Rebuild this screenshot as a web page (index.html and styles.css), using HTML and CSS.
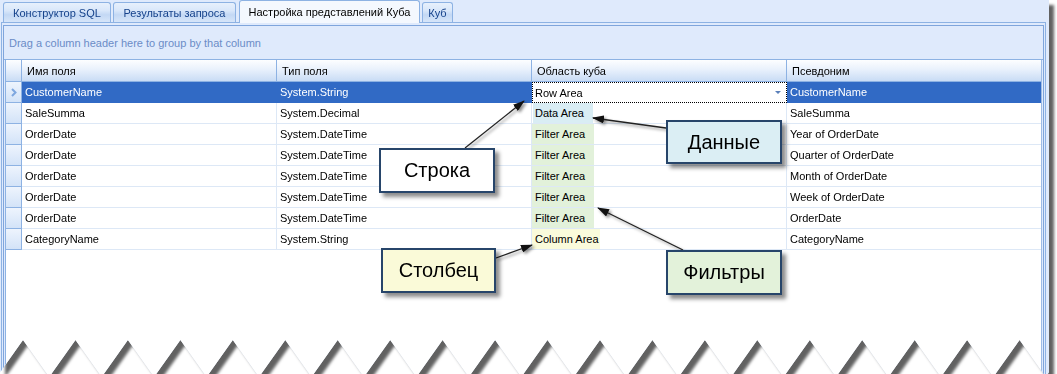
FILE: index.html
```html
<!DOCTYPE html>
<html lang="ru">
<head>
<meta charset="utf-8">
<title>Настройка представлений Куба</title>
<link rel="stylesheet" href="styles.css">
</head>
<body>
<div class="shot">
  <div class="frame">
    <div class="tabs">
      <div class="tab tab-sql">Конструктор SQL</div>
      <div class="tab tab-res">Результаты запроса</div>
      <div class="tab tab-cube-set active">Настройка представлений Куба</div>
      <div class="tab tab-cube">Куб</div>
    </div>
    <div class="page">
      <div class="inner">
        <div class="group-panel">Drag a column header here to group by that column</div>
        <div class="grid">
          <div class="row head">
            <div class="cell ind"></div>
            <div class="cell">Имя поля</div>
            <div class="cell">Тип поля</div>
            <div class="cell">Область куба</div>
            <div class="cell last">Псевдоним</div>
          </div>
          <div class="row selected">
            <div class="cell ind"><svg class="chev" width="6" height="9" viewBox="0 0 6 9"><polyline points="1,1 4.5,4.5 1,8" fill="none" stroke="#7ea7df" stroke-width="2"/></svg></div>
            <div class="cell">CustomerName</div>
            <div class="cell">System.String</div>
            <div class="cell editor">Row Area<span class="dd"></span></div>
            <div class="cell last">CustomerName</div>
          </div>
          <div class="row">
            <div class="cell ind"></div>
            <div class="cell">SaleSumma</div>
            <div class="cell">System.Decimal</div>
            <div class="cell area"><span class="tag tag-data">Data Area</span></div>
            <div class="cell last">SaleSumma</div>
          </div>
          <div class="row">
            <div class="cell ind"></div>
            <div class="cell">OrderDate</div>
            <div class="cell">System.DateTime</div>
            <div class="cell area"><span class="tag tag-filter">Filter Area</span></div>
            <div class="cell last">Year of OrderDate</div>
          </div>
          <div class="row">
            <div class="cell ind"></div>
            <div class="cell">OrderDate</div>
            <div class="cell">System.DateTime</div>
            <div class="cell area"><span class="tag tag-filter">Filter Area</span></div>
            <div class="cell last">Quarter of OrderDate</div>
          </div>
          <div class="row">
            <div class="cell ind"></div>
            <div class="cell">OrderDate</div>
            <div class="cell">System.DateTime</div>
            <div class="cell area"><span class="tag tag-filter">Filter Area</span></div>
            <div class="cell last">Month of OrderDate</div>
          </div>
          <div class="row">
            <div class="cell ind"></div>
            <div class="cell">OrderDate</div>
            <div class="cell">System.DateTime</div>
            <div class="cell area"><span class="tag tag-filter">Filter Area</span></div>
            <div class="cell last">Week of OrderDate</div>
          </div>
          <div class="row">
            <div class="cell ind"></div>
            <div class="cell">OrderDate</div>
            <div class="cell">System.DateTime</div>
            <div class="cell area"><span class="tag tag-filter">Filter Area</span></div>
            <div class="cell last">OrderDate</div>
          </div>
          <div class="row">
            <div class="cell ind"></div>
            <div class="cell">CategoryName</div>
            <div class="cell">System.String</div>
            <div class="cell area"><span class="tag tag-col">Column Area</span></div>
            <div class="cell last">CategoryName</div>
          </div>
        </div>
      </div>
    </div>

    <svg class="arrows" width="1049" height="380" viewBox="0 0 1049 380">
      <defs>
        <marker id="ah" viewBox="0 0 12 8" refX="11" refY="4" markerWidth="12" markerHeight="8" orient="auto" markerUnits="userSpaceOnUse">
          <path d="M0,0 L12,4 L0,8 z" fill="#111"/>
        </marker>
      </defs>
      <g stroke="#222" stroke-width="1.3" fill="none" marker-end="url(#ah)">
        <line x1="465" y1="148" x2="524" y2="101"/>
        <line x1="666" y1="128" x2="593" y2="118"/>
        <line x1="683" y1="250" x2="598" y2="208"/>
        <line x1="496" y1="258" x2="532" y2="245"/>
      </g>
    </svg>

    <div class="callout c-row">Строка</div>
    <div class="callout c-data">Данные</div>
    <div class="callout c-col">Столбец</div>
    <div class="callout c-filter">Фильтры</div>
  </div>
</div>
</body>
</html>
```
FILE: styles.css
```css
* { box-sizing: border-box; }
html, body { margin: 0; padding: 0; background: #fff; }
body {
  width: 1057px;
  height: 374px;
  overflow: hidden;
  font-family: "Liberation Sans", Arial, sans-serif;
  font-size: 11px;
  color: #000;
}

.shot {
  width: 1049px;
  filter: drop-shadow(5px 5px 1.5px rgba(0, 0, 0, 0.62));
}

.frame {
  position: relative;
  width: 1049px;
  height: 380px;
  background: #dfeafc;
  display: flex;
  flex-direction: column;
  clip-path: polygon(0 0, 1049px 0, 1049px 372.5px, 1045.8px 377px, 1019.6px 340px, 993.3px 377px, 967.1px 340px, 940.9px 377px, 914.7px 340px, 888.4px 377px, 862.2px 340px, 836px 377px, 809.8px 340px, 783.5px 377px, 757.3px 340px, 731.1px 377px, 704.9px 340px, 678.6px 377px, 652.4px 340px, 626.2px 377px, 600px 340px, 573.7px 377px, 547.5px 340px, 521.3px 377px, 495.1px 340px, 468.8px 377px, 442.6px 340px, 416.4px 377px, 390.2px 340px, 363.9px 377px, 337.7px 340px, 311.5px 377px, 285.3px 340px, 259px 377px, 232.8px 340px, 206.6px 377px, 180.4px 340px, 154.1px 377px, 127.9px 340px, 101.7px 377px, 75.5px 340px, 49.2px 377px, 23px 340px, 0 372.5px);
}

/* Tabs */
.tabs {
  display: flex;
  align-items: flex-end;
  gap: 2px;
  height: 22px;
  padding-left: 3px;
  position: relative;
  z-index: 2;
}
.tab {
  height: 20px;
  border: 1px solid #8db2e3;
  border-bottom: none;
  border-radius: 3px 3px 0 0;
  background: linear-gradient(to bottom, #e7f0fc 0%, #d9e7fa 40%, #c3d8f4 62%, #d6e5f9 100%);
  color: #15428b;
  display: flex;
  align-items: center;
  justify-content: center;
  padding-top: 1px;
  white-space: nowrap;
}
.tab-sql { width: 108px; }
.tab-res { width: 123px; }
.tab-cube-set { width: 181px; margin-left: 1px; }
.tab-cube { width: 31px; }
.tab.active {
  height: 23px;
  margin-bottom: -1px;
  background: #f4f8fe;
  color: #000;
  padding-top: 0;
}

/* Page */
.page {
  flex: 1;
  margin-left: 1px;
  width: 1045px;
  border: 1px solid #8db2e3;
  border-bottom: none;
  padding: 2px 1px 0 1px;
  display: flex;
  flex-direction: column;
}
.inner {
  flex: 1;
  border: 1px solid #7fa5dc;
  border-bottom: none;
  padding: 0 1px;
  display: flex;
  flex-direction: column;
}
.group-panel {
  height: 34px;
  margin: 0 -1px;
  padding-left: 5px;
  border-bottom: 1px solid #8db2e3;
  display: flex;
  align-items: center;
  color: #6b8cc7;
  background: #dfeafc;
}

/* Grid */
.grid {
  flex: 1;
  background: #fff;
  border-left: 1px solid #8db2e3;
  border-right: 1px solid #9dbbe6;
}
.row {
  display: grid;
  grid-template-columns: 16px 255px 255px 255px 254px;
  height: 21px;
}
.cell {
  border-right: 1px solid #dde8f6;
  border-bottom: 1px solid #dde8f6;
  padding-left: 3px;
  display: flex;
  align-items: center;
  white-space: nowrap;
  overflow: hidden;
}
.cell.last { border-right: none; }
.cell.ind {
  padding: 0;
  justify-content: center;
  background: linear-gradient(to bottom, #eef4fd, #d3e3f8);
  border-right: 1px solid #8db2e3;
  border-bottom: 1px solid #8db2e3;
}
.row.head { height: 22px; }
.row.head .cell {
  padding-left: 5px;
  background: linear-gradient(to bottom, #fdfeff 0%, #e9f1fc 45%, #c9dcf5 100%);
  border-right: 1px solid #8db2e3;
  border-bottom: 1px solid #8db2e3;
}
.row.head .cell.last { border-right: none; }

.row.selected .cell:not(.ind):not(.editor) {
  background: #316ac5;
  color: #fff;
  border-right-color: #316ac5;
  border-bottom-color: #316ac5;
}
.row.selected .cell.editor {
  background: #fff;
  border: 1px dotted #000;
  padding-left: 2px;
}
.dd {
  margin-left: auto;
  margin-right: 5px;
  width: 0;
  height: 0;
  border-left: 3px solid transparent;
  border-right: 3px solid transparent;
  border-top: 3px solid #5a80ba;
}

.cell.area { padding-left: 0; align-items: stretch; }
.tag {
  display: flex;
  align-items: center;
  padding-left: 3px;
}
.tag-data { width: 60px; margin-left: 1px; padding-left: 2px; background: #d9edf4; }
.tag-filter { width: 62px; background: #e2f1da; }
.tag-col { width: 68px; background: #fafbdb; }

/* Annotations */
.arrows {
  position: absolute;
  left: 0;
  top: 0;
  z-index: 3;
  filter: drop-shadow(2px 2px 1.5px rgba(0, 0, 0, 0.45));
}
.callout {
  position: absolute;
  z-index: 4;
  width: 116px;
  height: 45px;
  border: 2px solid #27456a;
  display: flex;
  align-items: center;
  justify-content: center;
  font-size: 20px;
  color: #000;
  box-shadow: 4px 4px 4px rgba(0, 0, 0, 0.45);
}
.c-row { left: 379px; top: 148px; background: #ffffff; }
.c-data { left: 666px; top: 120px; height: 44px; background: #dbeef4; }
.c-col { left: 381px; top: 248px; width: 115px; background: #fafad8; }
.c-filter { left: 666px; top: 250px; background: #e3f2da; }
```
